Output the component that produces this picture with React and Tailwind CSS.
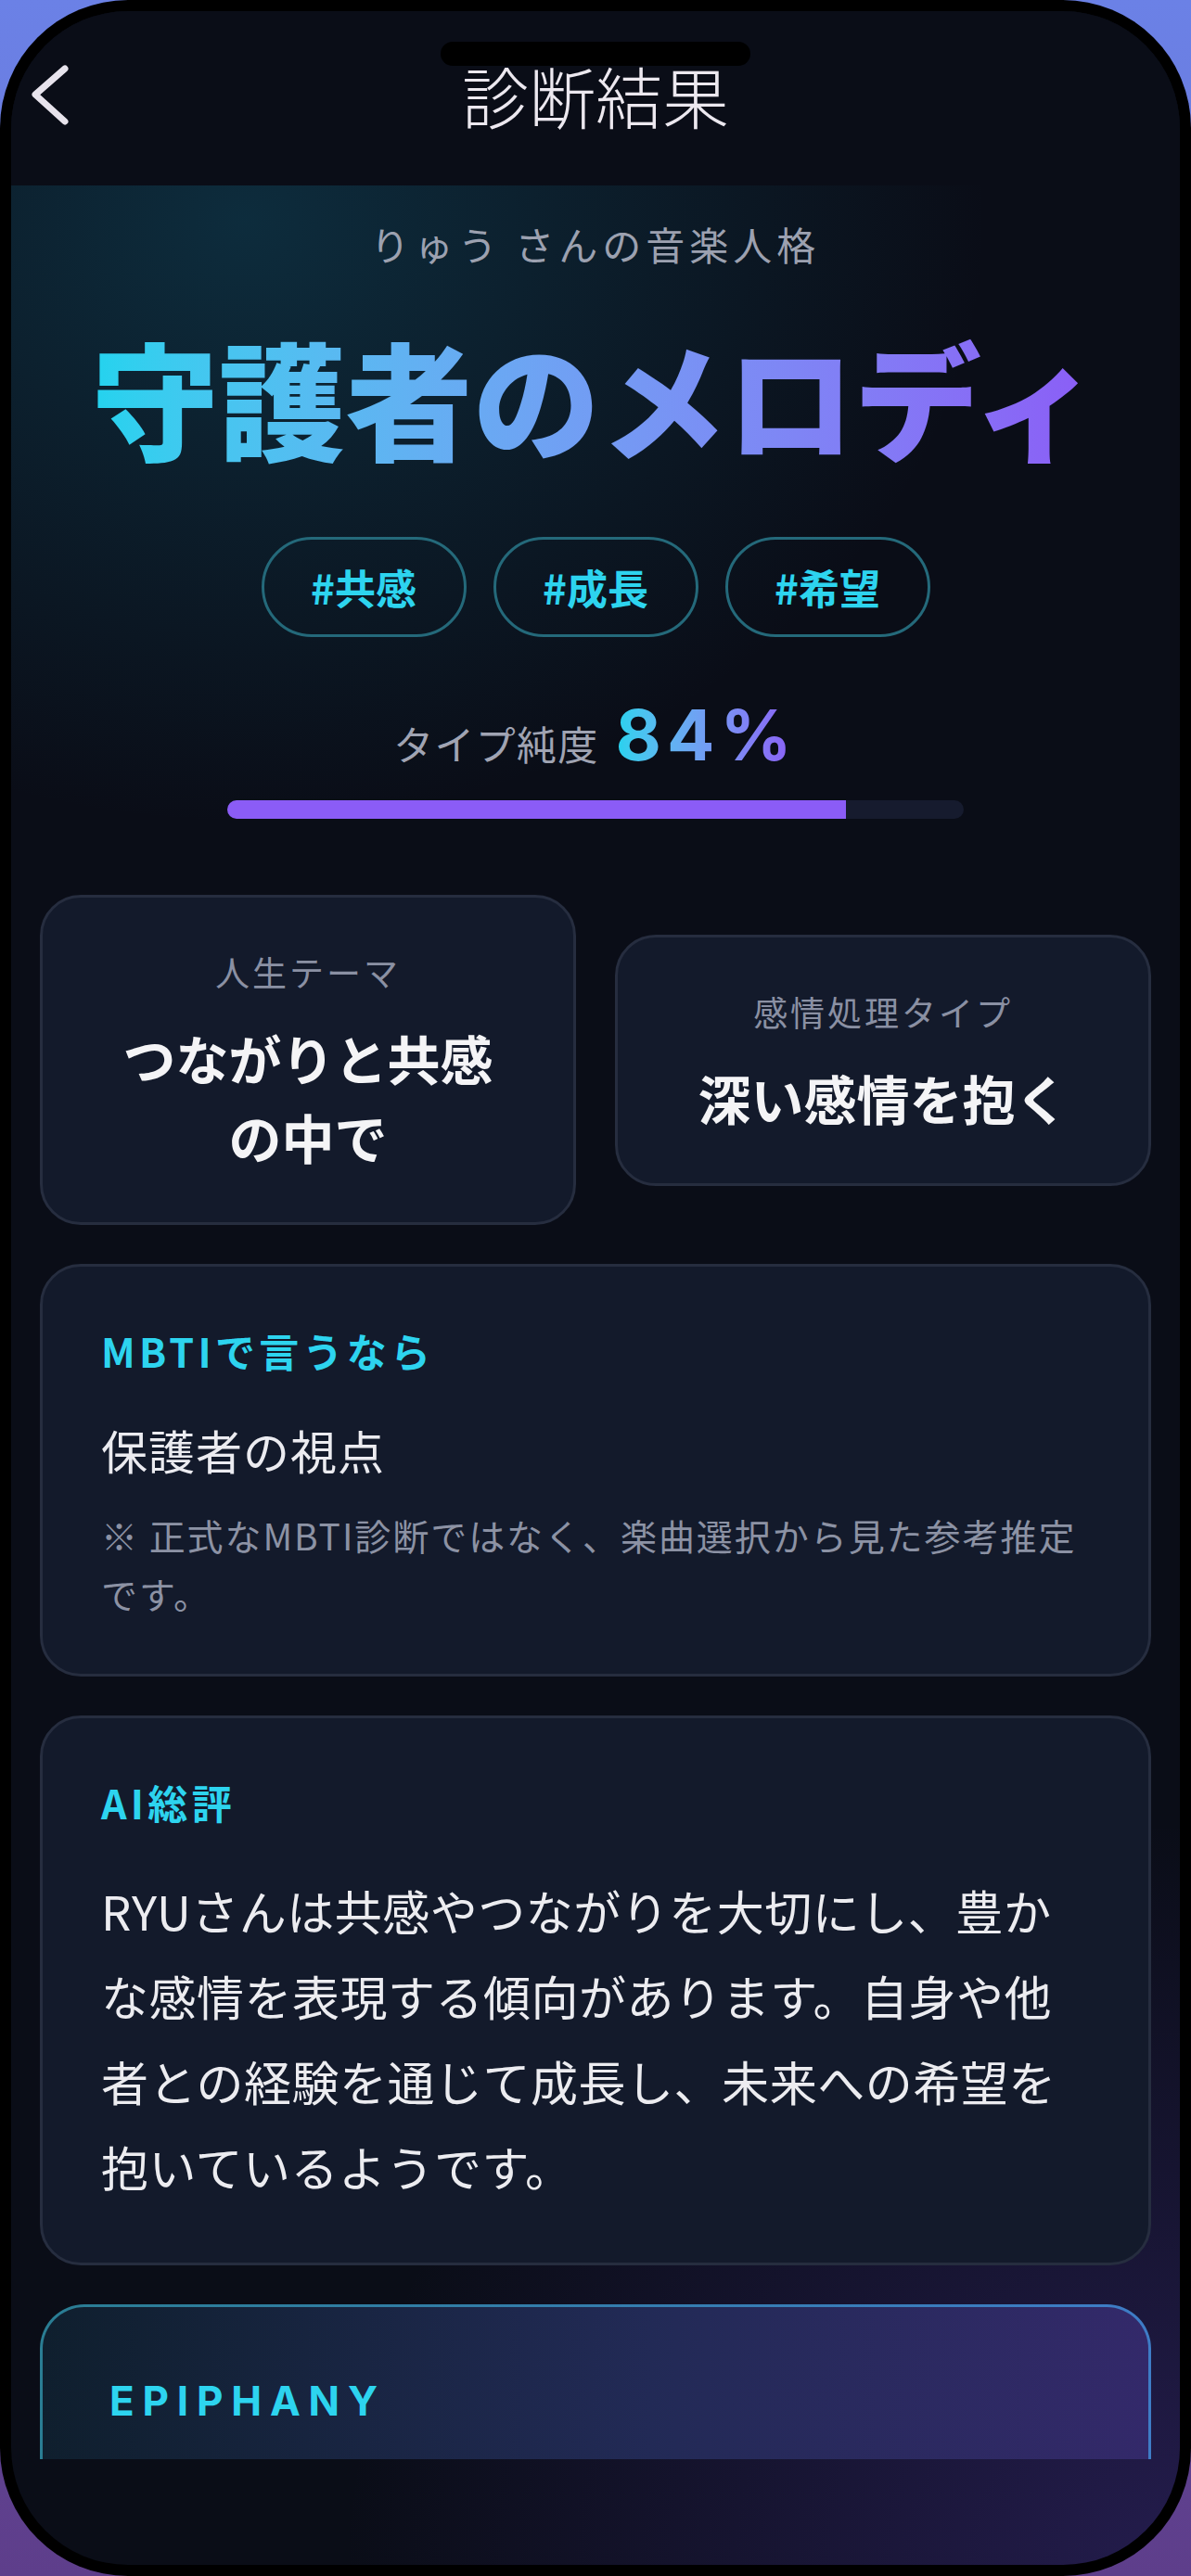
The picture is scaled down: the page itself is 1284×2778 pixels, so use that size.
import React from 'react';

const tags = ['#共感', '#成長', '#希望'];

function BackIcon() {
  return (
    <svg width="48" height="72" viewBox="0 0 48 72" fill="none">
      <polyline
        points="42,8 10,36 42,65"
        stroke="#e7e3ec"
        strokeWidth="7"
        strokeLinecap="round"
        strokeLinejoin="round"
      />
    </svg>
  );
}

function StatCard({ label, children }) {
  return (
    <div className="rounded-[44px] border-[3px] border-[#262d3f] bg-[#131a2b] px-[20px] pt-[52px] pb-[50px] text-center">
      <p className="text-[37px] leading-[57px] tracking-[0.08em] text-[#8a90a3]">{label}</p>
      <p className="mt-[21px] text-[57px] font-bold leading-[85px] text-[#f4f4f6]">{children}</p>
    </div>
  );
}

function SectionLabel({ children }) {
  return (
    <p className="text-[43px] font-bold leading-[63px] tracking-[0.1em] text-[#2dd4ef]">{children}</p>
  );
}

export default function App() {
  return (
    <div className="h-[2778px] w-[1284px] bg-linear-to-b from-[#6b81e6] to-[#5e3e8b] font-['Noto_Sans_CJK_JP','Noto_Sans',sans-serif]">
      <div className="h-full rounded-[138px] bg-black p-[12px]">
        <div className="relative flex h-full flex-col overflow-hidden rounded-[126px] bg-[#0a0d17] bg-[radial-gradient(ellipse_900px_800px_at_100%_100%,rgba(90,60,190,0.32),transparent)]">
          {/* notch */}
          <div className="absolute left-[463px] top-[33px] z-10 h-[26px] w-[334px] rounded-full bg-black" />

          {/* header */}
          <header className="grid h-[188px] shrink-0 grid-cols-[1fr_auto_1fr] items-center bg-[#0a0d17] pb-[9px]">
            <div className="pl-[16px]">
              <BackIcon />
            </div>
            <h1 className="text-[72px] font-light leading-none text-[#ece8ef]">診断結果</h1>
            <div />
          </header>

          {/* scroll content */}
          <main className="min-h-0 flex-1 overflow-hidden">
            <section className="flex flex-col items-center bg-[radial-gradient(ellipse_800px_650px_at_20%_5%,rgba(20,110,140,0.32),transparent)] pt-[33px] pb-[82px]">
              <p className="text-[42px] leading-[60px] tracking-[0.12em] text-[#9ca1b0]">りゅう さんの音楽人格</p>
              <h2 className="mt-[55px] inline-block bg-linear-to-r from-[#22d3ee] to-[#8b5cf6] bg-clip-text text-[137px] font-black leading-[158px] text-transparent">
                守護者のメロディ
              </h2>

              <div className="mt-[73px] flex gap-[29px]">
                {tags.map((t) => (
                  <span
                    key={t}
                    className="flex h-[108px] w-[221px] items-center justify-center rounded-full border-[3px] border-[#24697a] text-[44px] font-bold text-[#2dd4ef]"
                  >
                    {t}
                  </span>
                ))}
              </div>

              <div className="mt-[59px] flex items-baseline gap-[18px]">
                <span className="text-[43px] leading-[60px] tracking-[0.03em] text-[#a0a4b3]">タイプ純度</span>
                <span className="inline-block bg-linear-to-r from-[#22d3ee] to-[#8b5cf6] bg-clip-text font-['Inter',sans-serif] text-[76px] font-bold leading-[92px] tracking-[0.08em] text-transparent">
                  84%
                </span>
              </div>

              <div className="mt-[25px] h-[20px] w-[794px] overflow-hidden rounded-full bg-[#161b2e]">
                <div className="h-full bg-[#8b5cf6]" style={{ width: '84%' }} />
              </div>
            </section>

            <section className="flex flex-col gap-[42px] px-[31px]">
              <div className="grid grid-cols-2 items-center gap-[42px]">
                <StatCard label="人生テーマ">
                  つながりと共感
                  <br />
                  の中で
                </StatCard>
                <StatCard label="感情処理タイプ">深い感情を抱く</StatCard>
              </div>

              <div className="rounded-[44px] border-[3px] border-[#262d3f] bg-[#131a2b] px-[63px] pt-[59px] pb-[55px]">
                <SectionLabel>MBTIで言うなら</SectionLabel>
                <p className="mt-[38px] text-[50px] leading-[75px] tracking-[0.02em] text-[#ebebf0]">保護者の視点</p>
                <p className="mt-[23px] text-[39px] leading-[63px] tracking-[0.05em] text-[#8c92a4]">
                  ※ 正式なMBTI診断ではなく、楽曲選択から見た参考推定
                  <br />
                  です。
                </p>
              </div>

              <div className="rounded-[44px] border-[3px] border-[#262d3f] bg-[#131a2b] px-[63px] pt-[59px] pb-[58px]">
                <SectionLabel>AI総評</SectionLabel>
                <p className="mt-[39px] text-[51px] leading-[92px] tracking-[0.01em] text-[#ececf0]">
                  RYUさんは共感やつながりを大切にし、豊か
                  <br />
                  な感情を表現する傾向があります。自身や他
                  <br />
                  者との経験を通じて成長し、未来への希望を
                  <br />
                  抱いているようです。
                </p>
              </div>

              <div className="rounded-[48px] bg-linear-to-r from-[#2a7d93] to-[#3e7cc6] p-[3px]">
                <div className="h-[400px] rounded-[45px] bg-linear-to-r from-[#0f1f2e] via-[#222a56] via-55% to-[#33296a] pt-[79px] pl-[72px]">
                  <p className="font-['Inter',sans-serif] text-[44px] font-bold leading-none tracking-[0.2em] text-[#2dd4ef]">
                    EPIPHANY
                  </p>
                </div>
              </div>
            </section>
          </main>

          <div className="h-[114px] shrink-0" />
        </div>
      </div>
    </div>
  );
}
